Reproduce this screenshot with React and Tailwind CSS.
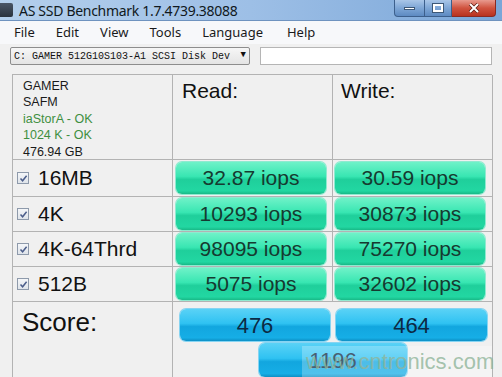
import React from "react";

const rows = [
  { name: "16MB", read: "32.87 iops", write: "30.59 iops", h: "h-[37px]" },
  { name: "4K", read: "10293 iops", write: "30873 iops", h: "h-[35px]" },
  { name: "4K-64Thrd", read: "98095 iops", write: "75270 iops", h: "h-[35px]" },
  { name: "512B", read: "5075 iops", write: "32602 iops", h: "h-[35px]" },
];

const greenBar =
  "bg-[linear-gradient(to_bottom,#6ff2c8_0%,#38e6b2_45%,#1fcf9b_55%,#22d7a2_90%,#18b987_100%)] shadow-[0_0_0_1px_#8fead0] text-[#163a30]";
const blueBar =
  "bg-[linear-gradient(to_bottom,#5ad2f6_0%,#2fc2f2_45%,#12a6df_55%,#16aee6_90%,#0d8fc4_100%)] shadow-[0_0_0_1px_#86d4f2] text-[#0c2a44]";

const Check = () => (
  <span className="w-[12px] h-[12px] border border-[#8e9aab] bg-[linear-gradient(to_bottom,#f4f6f9,#dfe4ea)] flex items-center justify-center shrink-0">
    <svg width="9" height="9" viewBox="0 0 9 9">
      <path d="M1.5 4.5 L3.6 6.8 L7.6 1.8" fill="none" stroke="#4b5d8a" strokeWidth="1.5" />
    </svg>
  </span>
);

const WinButton = ({ className, children }) => (
  <div className={`h-[17px] flex items-center justify-center border border-[#3c5f8c] border-t-0 ${className}`}>
    {children}
  </div>
);

export default function App() {
  return (
    <div className="w-[502px] h-[377px] overflow-hidden bg-[#f0f0f0] relative font-['Liberation_Sans',Arial,sans-serif]">
      {/* title bar */}
      <div className="h-[21px] flex items-center bg-[linear-gradient(to_right,#b4cfec,#9dbfe6_50%,#7aa6d8)] border-b border-[#6f93bf] relative">
        <div className="w-[13px] h-[14px] bg-[linear-gradient(to_bottom,#4a5566,#2a323d)] rounded-r-[2px] mr-[6px]" />
        <span className="text-[14px] text-[#101820] font-['Noto_Sans',sans-serif] tracking-[-0.3px]">
          AS SSD Benchmark 1.7.4739.38088
        </span>
        <div className="absolute right-[6px] top-0 flex">
          <WinButton className="w-[31px] rounded-bl-[4px] bg-[linear-gradient(to_bottom,#a9c6e8,#7ea6d6_50%,#5d8ac2)]">
            <span className="w-[11px] h-[3px] bg-white border border-[#3d5877]" />
          </WinButton>
          <WinButton className="w-[27px] border-l-0 bg-[linear-gradient(to_bottom,#a9c6e8,#7ea6d6_50%,#5d8ac2)]">
            <span className="w-[10px] h-[8px] border-2 border-white outline outline-1 outline-[#3d5877]" />
          </WinButton>
          <WinButton className="w-[44px] border-l-0 rounded-br-[4px] border-[#8a2a22] bg-[linear-gradient(to_bottom,#e89a8e,#d0533f_50%,#b8321f)]">
            <svg width="12" height="10" viewBox="0 0 12 10">
              <path d="M2 1 L10 9 M10 1 L2 9" stroke="#5a1a12" strokeWidth="3.4" />
              <path d="M2 1 L10 9 M10 1 L2 9" stroke="white" strokeWidth="2" />
            </svg>
          </WinButton>
        </div>
      </div>

      {/* menu bar */}
      <div className="h-[23px] bg-[#f7f8fa] flex items-center gap-[21px] pl-[14px] text-[13px] text-[#1a1a1a] font-['Noto_Sans',sans-serif]">
        <span>File</span>
        <span>Edit</span>
        <span>View</span>
        <span>Tools</span>
        <span>Language</span>
        <span className="ml-[3px]">Help</span>
      </div>

      {/* drive selector */}
      <div className="flex items-center pt-[3px] pl-[10px] gap-[10px]">
        <div className="w-[240px] h-[18px] border border-[#8d8d8d] rounded-[2px] bg-[linear-gradient(to_bottom,#f6f6f6,#e4e4e4)] flex items-center justify-between px-[3px] font-['Liberation_Mono',monospace] text-[10px] text-[#111]">
          <span>C: GAMER 512G10S103-A1 SCSI Disk Dev</span>
          <span className="text-[9px]">▼</span>
        </div>
        <div className="w-[232px] h-[18px] border border-[#b5b5b5] bg-white" />
      </div>

      {/* results grid */}
      <div className="ml-[12px] mt-[9px] w-[480px] border-l border-t border-[#b3b3b3] grid grid-cols-[160px_160px_160px]">
        <div className="h-[85px] border-r border-b border-[#b3b3b3] pl-[10px] pt-[3px] text-[12.5px] leading-[16.4px] text-[#1a1a1a]">
          <div>GAMER</div>
          <div>SAFM</div>
          <div className="text-[#3f8f3f]">iaStorA - OK</div>
          <div className="text-[#3f8f3f]">1024 K - OK</div>
          <div>476.94 GB</div>
        </div>
        <div className="h-[85px] border-r border-b border-[#b3b3b3] pl-[9px] text-[21px] text-[#111]">
          Read:
        </div>
        <div className="h-[85px] border-r border-b border-[#b3b3b3] pl-[8px] text-[21px] text-[#111]">
          Write:
        </div>

        {rows.map((r) => (
          <React.Fragment key={r.name}>
            <div className={`${r.h} border-r border-b border-[#b3b3b3] flex items-center pl-[4px] gap-[9px]`}>
              <Check />
              <span className="text-[21px] text-[#111]">{r.name}</span>
            </div>
            <div className={`${r.h} border-r border-b border-[#b3b3b3] flex items-center pl-[3px]`}>
              <div className={`w-[150px] h-[32px] rounded-[6px] flex items-center justify-center text-[21px] ${greenBar}`}>
                {r.read}
              </div>
            </div>
            <div className={`${r.h} border-r border-b border-[#b3b3b3] flex items-center pl-[2px]`}>
              <div className={`w-[150px] h-[32px] rounded-[6px] flex items-center justify-center text-[21px] ${greenBar}`}>
                {r.write}
              </div>
            </div>
          </React.Fragment>
        ))}

        <div className="h-[80px] border-r border-[#b3b3b3] pl-[9px] pt-[1px] text-[26px] text-[#111]">
          Score:
        </div>
        <div className="col-span-2 h-[80px] border-r border-[#b3b3b3] pl-[7px] pt-[7px]">
          <div className="flex gap-[6px]">
            <div className={`w-[150px] h-[32px] rounded-[6px] flex items-center justify-center text-[22px] ${blueBar}`}>
              476
            </div>
            <div className={`w-[151px] h-[32px] rounded-[6px] flex items-center justify-center text-[22px] ${blueBar}`}>
              464
            </div>
          </div>
          <div className={`ml-[79px] mt-[2px] w-[148px] h-[34px] rounded-[6px] flex items-center justify-center text-[22px] ${blueBar}`}>
            1196
          </div>
        </div>
      </div>

      {/* watermark */}
      <div className="absolute left-[302px] top-[346px] w-[190px] h-[31px] bg-white/25 flex items-center pl-[4px] text-[22px] text-[#8fb49a]/80 pointer-events-none">
        www.cntronics.com
      </div>
    </div>
  );
}
